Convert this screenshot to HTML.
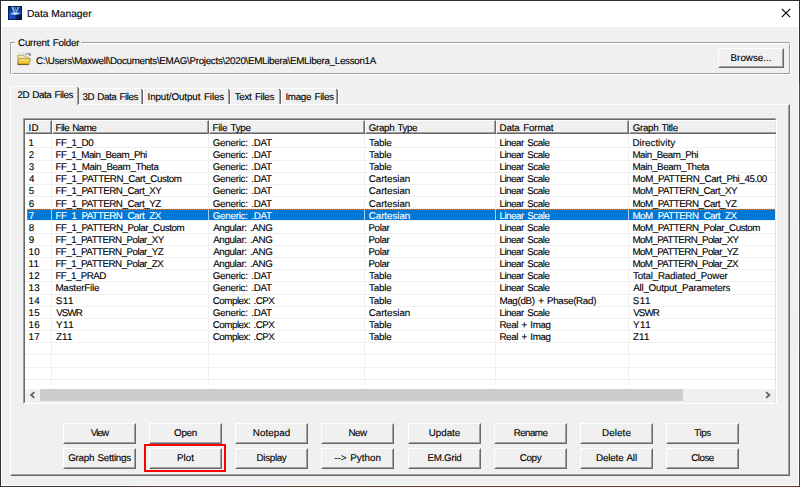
<!DOCTYPE html><html><head><meta charset="utf-8"><style>
*{margin:0;padding:0;box-sizing:border-box}
html,body{width:800px;height:487px;overflow:hidden;background:#f0f0f0}
body{position:relative;font-family:"Liberation Sans", sans-serif;font-size:9.8px;color:#000;text-rendering:geometricPrecision}
.a{position:absolute}
.t{position:absolute;white-space:pre;line-height:20px;height:20px;-webkit-text-stroke:0.12px currentColor}
</style></head><body>
<div class="a" style="left:0;top:0;width:800px;height:487px;border:1px solid #2e2e2e;border-right:0;border-bottom:0"></div>
<div class="a" style="left:799px;top:0;width:1px;height:487px;background:linear-gradient(#2e2e2e 0%,#2e2e2e 16%,#5a5030 18%,#6a5028 55%,#7a3424 75%,#7a2a22 100%)"></div>
<div class="a" style="left:0;top:486px;width:800px;height:1px;background:linear-gradient(90deg,#3a3a3a 0%,#5a3a34 30%,#7a2a22 70%,#7a2a22 100%)"></div>
<div class="a" style="left:1px;top:27px;width:1px;height:459px;background:#fff"></div>
<div class="a" style="left:798px;top:27px;width:1px;height:459px;background:#fff"></div>
<div class="a" style="left:1px;top:485px;width:798px;height:1px;background:#fff"></div>
<div class="a" style="left:1px;top:1px;width:798px;height:26px;background:#fff"></div>
<svg class="a" style="left:8px;top:6px" width="14" height="14" viewBox="0 0 14 14">
<defs>
<linearGradient id="ib" x1="0" y1="0" x2="1" y2="0"><stop offset="0" stop-color="#1a50d0"/><stop offset="0.5" stop-color="#1846b8"/><stop offset="0.58" stop-color="#0c2068"/><stop offset="1" stop-color="#081440"/></linearGradient>
<linearGradient id="it" x1="0" y1="0" x2="0" y2="1"><stop offset="0" stop-color="#0a1c60"/><stop offset="1" stop-color="#1e58c8"/></linearGradient>
<radialGradient id="ir" cx="0.5" cy="0.5" r="0.5"><stop offset="0" stop-color="#f4fcff"/><stop offset="0.4" stop-color="#b0e0ff" stop-opacity="0.95"/><stop offset="1" stop-color="#5aa0f0" stop-opacity="0"/></radialGradient>
<linearGradient id="ray" x1="0" y1="1" x2="0" y2="0"><stop offset="0" stop-color="#f0faff"/><stop offset="1" stop-color="#80c4ff" stop-opacity="0.75"/></linearGradient>
</defs>
<rect width="14" height="14" fill="#081848"/>
<rect x="0.5" y="0.5" width="13" height="7.5" fill="url(#it)"/>
<rect x="0.5" y="8" width="13" height="5.5" fill="url(#ib)"/>
<path d="M6.6 8 L2.8 0.6 L6 0.6 Z" fill="url(#ray)" opacity="1"/>
<path d="M7 8 L6.6 0.6 L8.4 0.6 Z" fill="url(#ray)" opacity="0.7"/>
<path d="M7.4 8 L9.4 0.6 L12 0.6 Z" fill="url(#ray)" opacity="0.95"/>
<ellipse cx="7.2" cy="7.6" rx="6.2" ry="1.9" fill="url(#ir)"/>
<rect x="0.25" y="0.25" width="13.5" height="13.5" fill="none" stroke="#061040" stroke-width="0.6"/>
</svg>
<div class="t" style="left:27px;top:4.85px;letter-spacing:0.000px;font-size:10.2px">Data Manager</div>
<svg class="a" style="left:781px;top:8px" width="11" height="11" viewBox="0 0 11 11"><path d="M0.8 0.8 L9.2 9.2 M9.2 0.8 L0.8 9.2" stroke="#000" stroke-width="1.15"/></svg>
<div class="a" style="left:10px;top:42px;width:780px;height:32px;border:1px solid #a0a0a0;border-right-color:#a0a0a0"></div>
<div class="a" style="left:11px;top:43px;width:779px;height:31px;border:1px solid #fff;border-right:0;border-bottom:0"></div>
<div class="a" style="left:790px;top:42px;width:1px;height:33px;background:#fff"></div>
<div class="a" style="left:10px;top:74px;width:781px;height:1px;background:#fff"></div>
<div class="a" style="left:15px;top:41px;width:66px;height:4px;background:#f0f0f0"></div>
<div class="t" style="left:18px;top:33.90px;letter-spacing:-0.200px;word-spacing:1.0px">Current Folder</div>
<svg class="a" style="left:17px;top:51px" width="16" height="16" viewBox="0 0 16 16">
<defs><linearGradient id="fg" x1="0" y1="0" x2="0" y2="1"><stop offset="0" stop-color="#fbe680"/><stop offset="1" stop-color="#e6b818"/></linearGradient>
<linearGradient id="fb" x1="0" y1="0" x2="0" y2="1"><stop offset="0" stop-color="#f6eaa8"/><stop offset="1" stop-color="#d8c060"/></linearGradient></defs>
<rect x="0" y="1" width="14.5" height="14.5" fill="#000" opacity="0.035"/>
<path d="M0.8 4.3 L6.8 4.3 L7.8 6.2 L11.3 6.2 L11.3 13.3 L0.8 13.3 Z" fill="url(#fb)" stroke="#9c8434" stroke-width="0.6"/>
<path d="M2.2 6.5 L10.5 6.5 M1.8 8 L2.4 12" stroke="#fffbe0" stroke-width="0.5" opacity="0.8"/>
<path d="M2.1 7.5 L13.6 7.8 L11.7 13.3 L0.8 13.3 Z" fill="url(#fg)" stroke="#8c7214" stroke-width="0.6"/>
<path d="M0.8 13.4 L11.7 13.4" stroke="#4a3c08" stroke-width="0.7"/>
<path d="M8.4 3.6 Q10.2 2.3 12.6 2.6" stroke="#6c6c6c" stroke-width="0.9" fill="none"/>
<path d="M12.1 3.0 L14.3 3.5 L12.7 5.0 Z" fill="#3c3c3c"/>
</svg>
<div class="t" style="left:36px;top:51.50px;letter-spacing:-0.292px">C:\Users\Maxwell\Documents\EMAG\Projects\2020\EMLibera\EMLibera_Lesson1A</div>
<div class="a" style="left:718px;top:48px;width:66px;height:20px;background:#f0f0f0;border:1px solid #fff;border-right-color:#696969;border-bottom-color:#696969"></div>
<div class="a" style="left:719px;top:49px;width:64px;height:18px;border:1px solid transparent;border-right-color:#a0a0a0;border-bottom-color:#a0a0a0"></div>
<div class="t" style="left:718px;top:49.30px;letter-spacing:0.000px;width:66px;text-align:center">Browse...</div>
<div class="a" style="left:10px;top:104px;width:780px;height:372px;border:1px solid #fff;border-right-color:#696969;border-bottom-color:#696969"></div>
<div class="a" style="left:11px;top:105px;width:778px;height:370px;border:1px solid transparent;border-right-color:#a0a0a0;border-bottom-color:#a0a0a0"></div>
<div class="a" style="left:79px;top:88px;width:62px;height:16px;border-top:1px solid #fff"></div>
<div class="a" style="left:142px;top:90px;width:1px;height:14px;background:#696969"></div>
<div class="a" style="left:141px;top:89px;width:1px;height:1px;background:#696969"></div>
<div class="a" style="left:141px;top:90px;width:1px;height:14px;background:#a0a0a0"></div>
<div class="a" style="left:143px;top:89px;width:1px;height:15px;background:#fff"></div>
<div class="t" style="left:82.5px;top:87.85px;letter-spacing:-0.458px;word-spacing:1.0px">3D Data Files</div>
<div class="a" style="left:142px;top:88px;width:86px;height:16px;border-top:1px solid #fff"></div>
<div class="a" style="left:229px;top:90px;width:1px;height:14px;background:#696969"></div>
<div class="a" style="left:228px;top:89px;width:1px;height:1px;background:#696969"></div>
<div class="a" style="left:228px;top:90px;width:1px;height:14px;background:#a0a0a0"></div>
<div class="a" style="left:230px;top:89px;width:1px;height:15px;background:#fff"></div>
<div class="t" style="left:147.5px;top:87.85px;letter-spacing:-0.094px;word-spacing:1.0px">Input/Output Files</div>
<div class="a" style="left:229px;top:88px;width:50px;height:16px;border-top:1px solid #fff"></div>
<div class="a" style="left:280px;top:90px;width:1px;height:14px;background:#696969"></div>
<div class="a" style="left:279px;top:89px;width:1px;height:1px;background:#696969"></div>
<div class="a" style="left:279px;top:90px;width:1px;height:14px;background:#a0a0a0"></div>
<div class="a" style="left:281px;top:89px;width:1px;height:15px;background:#fff"></div>
<div class="t" style="left:234.7px;top:87.85px;letter-spacing:-0.300px;word-spacing:1.0px">Text Files</div>
<div class="a" style="left:280px;top:88px;width:56px;height:16px;border-top:1px solid #fff"></div>
<div class="a" style="left:337px;top:90px;width:1px;height:14px;background:#696969"></div>
<div class="a" style="left:336px;top:89px;width:1px;height:1px;background:#696969"></div>
<div class="a" style="left:336px;top:90px;width:1px;height:14px;background:#a0a0a0"></div>
<div class="a" style="left:338px;top:89px;width:1px;height:15px;background:#fff"></div>
<div class="t" style="left:285.4px;top:87.85px;letter-spacing:-0.310px;word-spacing:1.0px">Image Files</div>
<div class="a" style="left:10px;top:86px;width:69px;height:19px;background:#f0f0f0;border-left:1px solid #fff;border-top:1px solid #fff"></div>
<div class="a" style="left:10px;top:86px;width:1px;height:1px;background:#f0f0f0"></div>
<div class="a" style="left:11px;top:87px;width:1px;height:1px;background:#fff"></div>
<div class="a" style="left:78px;top:88px;width:1px;height:16px;background:#696969"></div>
<div class="a" style="left:77px;top:87px;width:1px;height:1px;background:#696969"></div>
<div class="a" style="left:77px;top:88px;width:1px;height:17px;background:#a0a0a0"></div>
<div class="t" style="left:17.5px;top:86.00px;letter-spacing:-0.458px;word-spacing:1.0px">2D Data Files</div>
<div class="a" style="left:23px;top:118px;width:754px;height:286px;background:#fff;border:1px solid #a0a0a0;border-right-color:#fff;border-bottom-color:#fff"></div>
<div class="a" style="left:24px;top:119px;width:752px;height:284px;border:1px solid #696969;border-right-color:#e3e3e3;border-bottom-color:#e3e3e3"></div>
<div class="a" style="left:25px;top:120px;width:750px;height:14px;background:#f0f0f0"></div>
<div class="a" style="left:25px;top:120px;width:27px;height:14px;border:1px solid #fff;border-right-color:#696969;border-bottom-color:#696969"></div>
<div class="a" style="left:26px;top:121px;width:25px;height:12px;border-right:1px solid #a0a0a0;border-bottom:1px solid #a0a0a0"></div>
<div class="t" style="left:28.395605468750002px;top:118.50px;letter-spacing:0.500px">ID</div>
<div class="a" style="left:52px;top:120px;width:157px;height:14px;border:1px solid #fff;border-right-color:#696969;border-bottom-color:#696969"></div>
<div class="a" style="left:53px;top:121px;width:155px;height:12px;border-right:1px solid #a0a0a0;border-bottom:1px solid #a0a0a0"></div>
<div class="t" style="left:55.49609375px;top:118.50px;letter-spacing:-0.550px;word-spacing:1.0px">File Name</div>
<div class="a" style="left:209px;top:120px;width:156px;height:14px;border:1px solid #fff;border-right-color:#696969;border-bottom-color:#696969"></div>
<div class="a" style="left:210px;top:121px;width:154px;height:12px;border-right:1px solid #a0a0a0;border-bottom:1px solid #a0a0a0"></div>
<div class="t" style="left:212.49609375px;top:118.50px;letter-spacing:-0.263px;word-spacing:1.0px">File Type</div>
<div class="a" style="left:365px;top:120px;width:131px;height:14px;border:1px solid #fff;border-right-color:#696969;border-bottom-color:#696969"></div>
<div class="a" style="left:366px;top:121px;width:129px;height:12px;border-right:1px solid #a0a0a0;border-bottom:1px solid #a0a0a0"></div>
<div class="t" style="left:368.80712890625px;top:118.50px;letter-spacing:-0.361px;word-spacing:1.0px">Graph Type</div>
<div class="a" style="left:496px;top:120px;width:133px;height:14px;border:1px solid #fff;border-right-color:#696969;border-bottom-color:#696969"></div>
<div class="a" style="left:497px;top:121px;width:131px;height:12px;border-right:1px solid #a0a0a0;border-bottom:1px solid #a0a0a0"></div>
<div class="t" style="left:499.49609375px;top:118.50px;letter-spacing:-0.150px;word-spacing:1.0px">Data Format</div>
<div class="a" style="left:629px;top:120px;width:147px;height:14px;border:1px solid #fff;border-right:0;border-bottom-color:#696969"></div>
<div class="a" style="left:630px;top:121px;width:146px;height:12px;border-bottom:1px solid #a0a0a0"></div>
<div class="t" style="left:632.80712890625px;top:118.50px;letter-spacing:-0.360px;word-spacing:1.0px">Graph Title</div>
<div class="a" style="left:51px;top:134px;width:1px;height:252px;background:#f0f0f0"></div>
<div class="a" style="left:208px;top:134px;width:1px;height:252px;background:#f0f0f0"></div>
<div class="a" style="left:364px;top:134px;width:1px;height:252px;background:#f0f0f0"></div>
<div class="a" style="left:495px;top:134px;width:1px;height:252px;background:#f0f0f0"></div>
<div class="a" style="left:628px;top:134px;width:1px;height:252px;background:#f0f0f0"></div>
<div class="a" style="left:25px;top:147.40px;width:750px;height:1px;background:#f0f0f0"></div>
<div class="a" style="left:25px;top:159.58px;width:750px;height:1px;background:#f0f0f0"></div>
<div class="a" style="left:25px;top:171.76px;width:750px;height:1px;background:#f0f0f0"></div>
<div class="a" style="left:25px;top:183.94px;width:750px;height:1px;background:#f0f0f0"></div>
<div class="a" style="left:25px;top:196.12px;width:750px;height:1px;background:#f0f0f0"></div>
<div class="a" style="left:25px;top:208.30px;width:750px;height:1px;background:#f0f0f0"></div>
<div class="a" style="left:25px;top:220.48px;width:750px;height:1px;background:#f0f0f0"></div>
<div class="a" style="left:25px;top:232.66px;width:750px;height:1px;background:#f0f0f0"></div>
<div class="a" style="left:25px;top:244.84px;width:750px;height:1px;background:#f0f0f0"></div>
<div class="a" style="left:25px;top:257.02px;width:750px;height:1px;background:#f0f0f0"></div>
<div class="a" style="left:25px;top:269.20px;width:750px;height:1px;background:#f0f0f0"></div>
<div class="a" style="left:25px;top:281.38px;width:750px;height:1px;background:#f0f0f0"></div>
<div class="a" style="left:25px;top:293.56px;width:750px;height:1px;background:#f0f0f0"></div>
<div class="a" style="left:25px;top:305.74px;width:750px;height:1px;background:#f0f0f0"></div>
<div class="a" style="left:25px;top:317.92px;width:750px;height:1px;background:#f0f0f0"></div>
<div class="a" style="left:25px;top:330.10px;width:750px;height:1px;background:#f0f0f0"></div>
<div class="a" style="left:25px;top:342.28px;width:750px;height:1px;background:#f0f0f0"></div>
<div class="a" style="left:25px;top:354.46px;width:750px;height:1px;background:#f0f0f0"></div>
<div class="a" style="left:25px;top:366.64px;width:750px;height:1px;background:#f0f0f0"></div>
<div class="a" style="left:25px;top:378.82px;width:750px;height:1px;background:#f0f0f0"></div>
<div class="a" style="left:27px;top:209.30px;width:748px;height:11.18px;background:#0078d7"></div>
<div class="a" style="left:51px;top:209.30px;width:1px;height:11.18px;background:#a8d0f0"></div>
<div class="a" style="left:208px;top:209.30px;width:1px;height:11.18px;background:#a8d0f0"></div>
<div class="a" style="left:364px;top:209.30px;width:1px;height:11.18px;background:#a8d0f0"></div>
<div class="a" style="left:495px;top:209.30px;width:1px;height:11.18px;background:#a8d0f0"></div>
<div class="a" style="left:628px;top:209.30px;width:1px;height:11.18px;background:#a8d0f0"></div>
<div class="a" style="left:27px;top:209.30px;width:748px;height:11.18px;border-top:1px dotted #ff9a40;border-left:1px dotted #ff9a40;opacity:0.8"></div>
<div class="t" style="left:28.453515624999998px;top:133.80px;letter-spacing:0.134px">1</div>
<div class="t" style="left:55.396093750000006px;top:133.80px;letter-spacing:-0.417px">FF_1_D0</div>
<div class="t" style="left:212.70712890624998px;top:133.80px;letter-spacing:-0.250px;word-spacing:1.0px">Generic: .DAT</div>
<div class="t" style="left:368.97988281249997px;top:133.80px;letter-spacing:-0.175px">Table</div>
<div class="t" style="left:499.39609375px;top:133.80px;letter-spacing:-0.455px;word-spacing:1.0px">Linear Scale</div>
<div class="t" style="left:632.3960937500001px;top:133.80px;letter-spacing:0.025px">Directivity</div>
<div class="t" style="left:28.70712890625px;top:145.94px;letter-spacing:0.134px">2</div>
<div class="t" style="left:55.396093750000006px;top:145.94px;letter-spacing:-0.494px">FF_1_Main_Beam_Phi</div>
<div class="t" style="left:212.70712890624998px;top:145.94px;letter-spacing:-0.250px;word-spacing:1.0px">Generic: .DAT</div>
<div class="t" style="left:368.97988281249997px;top:145.94px;letter-spacing:-0.175px">Table</div>
<div class="t" style="left:499.39609375px;top:145.94px;letter-spacing:-0.455px;word-spacing:1.0px">Linear Scale</div>
<div class="t" style="left:632.3960937500001px;top:145.94px;letter-spacing:-0.483px">Main_Beam_Phi</div>
<div class="t" style="left:28.8267578125px;top:158.08px;letter-spacing:0.134px">3</div>
<div class="t" style="left:55.396093750000006px;top:158.08px;letter-spacing:-0.400px">FF_1_Main_Beam_Theta</div>
<div class="t" style="left:212.70712890624998px;top:158.08px;letter-spacing:-0.250px;word-spacing:1.0px">Generic: .DAT</div>
<div class="t" style="left:368.97988281249997px;top:158.08px;letter-spacing:-0.175px">Table</div>
<div class="t" style="left:499.39609375px;top:158.08px;letter-spacing:-0.455px;word-spacing:1.0px">Linear Scale</div>
<div class="t" style="left:632.3960937500001px;top:158.08px;letter-spacing:-0.407px">Main_Beam_Theta</div>
<div class="t" style="left:28.97509765625px;top:170.22px;letter-spacing:0.134px">4</div>
<div class="t" style="left:55.396093750000006px;top:170.22px;letter-spacing:-0.396px">FF_1_PATTERN_Cart_Custom</div>
<div class="t" style="left:212.70712890624998px;top:170.22px;letter-spacing:-0.250px;word-spacing:1.0px">Generic: .DAT</div>
<div class="t" style="left:368.70234375px;top:170.22px;letter-spacing:-0.037px">Cartesian</div>
<div class="t" style="left:499.39609375px;top:170.22px;letter-spacing:-0.455px;word-spacing:1.0px">Linear Scale</div>
<div class="t" style="left:632.3960937500001px;top:170.22px;letter-spacing:-0.404px">MoM_PATTERN_Cart_Phi_45.00</div>
<div class="t" style="left:28.8076171875px;top:182.36px;letter-spacing:0.134px">5</div>
<div class="t" style="left:55.396093750000006px;top:182.36px;letter-spacing:-0.458px">FF_1_PATTERN_Cart_XY</div>
<div class="t" style="left:212.70712890624998px;top:182.36px;letter-spacing:-0.250px;word-spacing:1.0px">Generic: .DAT</div>
<div class="t" style="left:368.70234375px;top:182.36px;letter-spacing:-0.037px">Cartesian</div>
<div class="t" style="left:499.39609375px;top:182.36px;letter-spacing:-0.455px;word-spacing:1.0px">Linear Scale</div>
<div class="t" style="left:632.3960937500001px;top:182.36px;letter-spacing:-0.489px">MoM_PATTERN_Cart_XY</div>
<div class="t" style="left:28.70234375px;top:194.50px;letter-spacing:0.134px">6</div>
<div class="t" style="left:55.396093750000006px;top:194.50px;letter-spacing:-0.458px">FF_1_PATTERN_Cart_YZ</div>
<div class="t" style="left:212.70712890624998px;top:194.50px;letter-spacing:-0.250px;word-spacing:1.0px">Generic: .DAT</div>
<div class="t" style="left:368.70234375px;top:194.50px;letter-spacing:-0.037px">Cartesian</div>
<div class="t" style="left:499.39609375px;top:194.50px;letter-spacing:-0.455px;word-spacing:1.0px">Linear Scale</div>
<div class="t" style="left:632.3960937500001px;top:194.50px;letter-spacing:-0.489px">MoM_PATTERN_Cart_YZ</div>
<div class="t" style="left:28.69755859375px;top:206.64px;letter-spacing:0.134px;color:#fff">7</div>
<div class="t" style="left:55.396093750000006px;top:206.64px;letter-spacing:-0.458px;color:#fff">FF_1_PATTERN_Cart_ZX</div>
<div class="t" style="left:212.70712890624998px;top:206.64px;letter-spacing:-0.250px;word-spacing:1.0px;color:#fff">Generic: .DAT</div>
<div class="t" style="left:368.70234375px;top:206.64px;letter-spacing:-0.037px;color:#fff">Cartesian</div>
<div class="t" style="left:499.39609375px;top:206.64px;letter-spacing:-0.455px;word-spacing:1.0px;color:#fff">Linear Scale</div>
<div class="t" style="left:632.3960937500001px;top:206.64px;letter-spacing:-0.489px;color:#fff">MoM_PATTERN_Cart_ZX</div>
<div class="t" style="left:28.77412109375px;top:218.78px;letter-spacing:0.134px">8</div>
<div class="t" style="left:55.396093750000006px;top:218.78px;letter-spacing:-0.454px">FF_1_PATTERN_Polar_Custom</div>
<div class="t" style="left:213.18085937499998px;top:218.78px;letter-spacing:-0.375px;word-spacing:1.0px">Angular: .ANG</div>
<div class="t" style="left:368.39609375px;top:218.78px;letter-spacing:-0.355px">Polar</div>
<div class="t" style="left:499.39609375px;top:218.78px;letter-spacing:-0.455px;word-spacing:1.0px">Linear Scale</div>
<div class="t" style="left:632.3960937500001px;top:218.78px;letter-spacing:-0.478px">MoM_PATTERN_Polar_Custom</div>
<div class="t" style="left:28.740624999999998px;top:230.92px;letter-spacing:0.134px">9</div>
<div class="t" style="left:55.396093750000006px;top:230.92px;letter-spacing:-0.525px">FF_1_PATTERN_Polar_XY</div>
<div class="t" style="left:213.18085937499998px;top:230.92px;letter-spacing:-0.375px;word-spacing:1.0px">Angular: .ANG</div>
<div class="t" style="left:368.39609375px;top:230.92px;letter-spacing:-0.355px">Polar</div>
<div class="t" style="left:499.39609375px;top:230.92px;letter-spacing:-0.455px;word-spacing:1.0px">Linear Scale</div>
<div class="t" style="left:632.3960937500001px;top:230.92px;letter-spacing:-0.611px">MoM_PATTERN_Polar_XY</div>
<div class="t" style="left:28.453515624999998px;top:243.06px;letter-spacing:0.268px">10</div>
<div class="t" style="left:55.396093750000006px;top:243.06px;letter-spacing:-0.525px">FF_1_PATTERN_Polar_YZ</div>
<div class="t" style="left:213.18085937499998px;top:243.06px;letter-spacing:-0.375px;word-spacing:1.0px">Angular: .ANG</div>
<div class="t" style="left:368.39609375px;top:243.06px;letter-spacing:-0.355px">Polar</div>
<div class="t" style="left:499.39609375px;top:243.06px;letter-spacing:-0.455px;word-spacing:1.0px">Linear Scale</div>
<div class="t" style="left:632.3960937500001px;top:243.06px;letter-spacing:-0.611px">MoM_PATTERN_Polar_YZ</div>
<div class="t" style="left:28.453515624999998px;top:255.20px;letter-spacing:0.268px">11</div>
<div class="t" style="left:55.396093750000006px;top:255.20px;letter-spacing:-0.525px">FF_1_PATTERN_Polar_ZX</div>
<div class="t" style="left:213.18085937499998px;top:255.20px;letter-spacing:-0.375px;word-spacing:1.0px">Angular: .ANG</div>
<div class="t" style="left:368.39609375px;top:255.20px;letter-spacing:-0.355px">Polar</div>
<div class="t" style="left:499.39609375px;top:255.20px;letter-spacing:-0.455px;word-spacing:1.0px">Linear Scale</div>
<div class="t" style="left:632.3960937500001px;top:255.20px;letter-spacing:-0.611px">MoM_PATTERN_Polar_ZX</div>
<div class="t" style="left:28.453515624999998px;top:267.34px;letter-spacing:0.268px">12</div>
<div class="t" style="left:55.396093750000006px;top:267.34px;letter-spacing:-0.588px">FF_1_PRAD</div>
<div class="t" style="left:212.70712890624998px;top:267.34px;letter-spacing:-0.250px;word-spacing:1.0px">Generic: .DAT</div>
<div class="t" style="left:368.97988281249997px;top:267.34px;letter-spacing:-0.175px">Table</div>
<div class="t" style="left:499.39609375px;top:267.34px;letter-spacing:-0.455px;word-spacing:1.0px">Linear Scale</div>
<div class="t" style="left:632.9798828125px;top:267.34px;letter-spacing:-0.200px">Total_Radiated_Power</div>
<div class="t" style="left:28.453515624999998px;top:279.48px;letter-spacing:0.268px">13</div>
<div class="t" style="left:55.396093750000006px;top:279.48px;letter-spacing:-0.178px">MasterFile</div>
<div class="t" style="left:212.70712890624998px;top:279.48px;letter-spacing:-0.250px;word-spacing:1.0px">Generic: .DAT</div>
<div class="t" style="left:368.97988281249997px;top:279.48px;letter-spacing:-0.175px">Table</div>
<div class="t" style="left:499.39609375px;top:279.48px;letter-spacing:-0.455px;word-spacing:1.0px">Linear Scale</div>
<div class="t" style="left:633.1808593750001px;top:279.48px;letter-spacing:-0.225px">All_Output_Parameters</div>
<div class="t" style="left:28.453515624999998px;top:291.62px;letter-spacing:0.268px">14</div>
<div class="t" style="left:55.754980468750006px;top:291.62px;letter-spacing:0.500px">S11</div>
<div class="t" style="left:212.70234374999998px;top:291.62px;letter-spacing:-0.483px;word-spacing:1.0px">Complex: .CPX</div>
<div class="t" style="left:368.97988281249997px;top:291.62px;letter-spacing:-0.175px">Table</div>
<div class="t" style="left:499.39609375px;top:291.62px;letter-spacing:-0.316px;word-spacing:1.0px">Mag(dB) + Phase(Rad)</div>
<div class="t" style="left:632.7549804687501px;top:291.62px;letter-spacing:0.500px">S11</div>
<div class="t" style="left:28.453515624999998px;top:303.76px;letter-spacing:0.268px">15</div>
<div class="t" style="left:56.156933593750004px;top:303.76px;letter-spacing:-0.900px">VSWR</div>
<div class="t" style="left:212.70712890624998px;top:303.76px;letter-spacing:-0.250px;word-spacing:1.0px">Generic: .DAT</div>
<div class="t" style="left:368.70234375px;top:303.76px;letter-spacing:-0.037px">Cartesian</div>
<div class="t" style="left:499.39609375px;top:303.76px;letter-spacing:-0.455px;word-spacing:1.0px">Linear Scale</div>
<div class="t" style="left:633.1569335937501px;top:303.76px;letter-spacing:-0.900px">VSWR</div>
<div class="t" style="left:28.453515624999998px;top:315.90px;letter-spacing:0.268px">16</div>
<div class="t" style="left:55.98466796875px;top:315.90px;letter-spacing:0.500px">Y11</div>
<div class="t" style="left:212.70234374999998px;top:315.90px;letter-spacing:-0.483px;word-spacing:1.0px">Complex: .CPX</div>
<div class="t" style="left:368.97988281249997px;top:315.90px;letter-spacing:-0.175px">Table</div>
<div class="t" style="left:499.39609375px;top:315.90px;letter-spacing:-0.350px;word-spacing:1.0px">Real + Imag</div>
<div class="t" style="left:632.98466796875px;top:315.90px;letter-spacing:0.500px">Y11</div>
<div class="t" style="left:28.453515624999998px;top:328.04px;letter-spacing:0.268px">17</div>
<div class="t" style="left:55.88896484375px;top:328.04px;letter-spacing:0.150px">Z11</div>
<div class="t" style="left:212.70234374999998px;top:328.04px;letter-spacing:-0.483px;word-spacing:1.0px">Complex: .CPX</div>
<div class="t" style="left:368.97988281249997px;top:328.04px;letter-spacing:-0.175px">Table</div>
<div class="t" style="left:499.39609375px;top:328.04px;letter-spacing:-0.350px;word-spacing:1.0px">Real + Imag</div>
<div class="t" style="left:632.88896484375px;top:328.04px;letter-spacing:0.150px">Z11</div>
<div class="a" style="left:25px;top:388.5px;width:750px;height:14px;background:#f0f0f0"></div>
<div class="a" style="left:40px;top:389px;width:643px;height:12px;background:#cdcdcd"></div>
<svg class="a" style="left:28px;top:390px" width="10" height="10" viewBox="0 0 10 10"><path d="M6.4 2.2 L3.1 5 L6.4 7.8" stroke="#606060" stroke-width="1.75" fill="none"/></svg>
<svg class="a" style="left:763px;top:390px" width="10" height="10" viewBox="0 0 10 10"><path d="M3.1 2.2 L6.4 5 L3.1 7.8" stroke="#606060" stroke-width="1.75" fill="none"/></svg>
<div class="a" style="left:63px;top:423px;width:73px;height:21px;background:#f0f0f0;border:1px solid #fff;border-right-color:#696969;border-bottom-color:#696969"></div>
<div class="a" style="left:64px;top:424px;width:71px;height:19px;border:1px solid transparent;border-right-color:#a0a0a0;border-bottom-color:#a0a0a0"></div>
<div class="t" style="left:63px;top:424.30px;letter-spacing:-0.833px;width:73px;text-align:center">View</div>
<div class="a" style="left:63px;top:448px;width:73px;height:21px;background:#f0f0f0;border:1px solid #fff;border-right-color:#696969;border-bottom-color:#696969"></div>
<div class="a" style="left:64px;top:449px;width:71px;height:19px;border:1px solid transparent;border-right-color:#a0a0a0;border-bottom-color:#a0a0a0"></div>
<div class="t" style="left:63px;top:449.30px;letter-spacing:-0.269px;word-spacing:1.0px;width:73px;text-align:center">Graph Settings</div>
<div class="a" style="left:149px;top:423px;width:73px;height:21px;background:#f0f0f0;border:1px solid #fff;border-right-color:#696969;border-bottom-color:#696969"></div>
<div class="a" style="left:150px;top:424px;width:71px;height:19px;border:1px solid transparent;border-right-color:#a0a0a0;border-bottom-color:#a0a0a0"></div>
<div class="t" style="left:149px;top:424.30px;letter-spacing:-0.300px;width:73px;text-align:center">Open</div>
<div class="a" style="left:149px;top:448px;width:73px;height:21px;background:#f0f0f0;border:1px solid #fff;border-right-color:#696969;border-bottom-color:#696969"></div>
<div class="a" style="left:150px;top:449px;width:71px;height:19px;border:1px solid transparent;border-right-color:#a0a0a0;border-bottom-color:#a0a0a0"></div>
<div class="t" style="left:149px;top:449.30px;letter-spacing:0.083px;width:73px;text-align:center">Plot</div>
<div class="a" style="left:235px;top:423px;width:73px;height:21px;background:#f0f0f0;border:1px solid #fff;border-right-color:#696969;border-bottom-color:#696969"></div>
<div class="a" style="left:236px;top:424px;width:71px;height:19px;border:1px solid transparent;border-right-color:#a0a0a0;border-bottom-color:#a0a0a0"></div>
<div class="t" style="left:235px;top:424.30px;letter-spacing:0.067px;width:73px;text-align:center">Notepad</div>
<div class="a" style="left:235px;top:448px;width:73px;height:21px;background:#f0f0f0;border:1px solid #fff;border-right-color:#696969;border-bottom-color:#696969"></div>
<div class="a" style="left:236px;top:449px;width:71px;height:19px;border:1px solid transparent;border-right-color:#a0a0a0;border-bottom-color:#a0a0a0"></div>
<div class="t" style="left:235px;top:449.30px;letter-spacing:-0.317px;width:73px;text-align:center">Display</div>
<div class="a" style="left:321px;top:423px;width:73px;height:21px;background:#f0f0f0;border:1px solid #fff;border-right-color:#696969;border-bottom-color:#696969"></div>
<div class="a" style="left:322px;top:424px;width:71px;height:19px;border:1px solid transparent;border-right-color:#a0a0a0;border-bottom-color:#a0a0a0"></div>
<div class="t" style="left:321px;top:424.30px;letter-spacing:-0.450px;width:73px;text-align:center">New</div>
<div class="a" style="left:321px;top:448px;width:73px;height:21px;background:#f0f0f0;border:1px solid #fff;border-right-color:#696969;border-bottom-color:#696969"></div>
<div class="a" style="left:322px;top:449px;width:71px;height:19px;border:1px solid transparent;border-right-color:#a0a0a0;border-bottom-color:#a0a0a0"></div>
<div class="t" style="left:321px;top:449.30px;letter-spacing:0.028px;word-spacing:1.0px;width:73px;text-align:center">--&gt; Python</div>
<div class="a" style="left:408px;top:423px;width:73px;height:21px;background:#f0f0f0;border:1px solid #fff;border-right-color:#696969;border-bottom-color:#696969"></div>
<div class="a" style="left:409px;top:424px;width:71px;height:19px;border:1px solid transparent;border-right-color:#a0a0a0;border-bottom-color:#a0a0a0"></div>
<div class="t" style="left:408px;top:424.30px;letter-spacing:0.000px;width:73px;text-align:center">Update</div>
<div class="a" style="left:408px;top:448px;width:73px;height:21px;background:#f0f0f0;border:1px solid #fff;border-right-color:#696969;border-bottom-color:#696969"></div>
<div class="a" style="left:409px;top:449px;width:71px;height:19px;border:1px solid transparent;border-right-color:#a0a0a0;border-bottom-color:#a0a0a0"></div>
<div class="t" style="left:408px;top:449.30px;letter-spacing:-0.292px;width:73px;text-align:center">EM.Grid</div>
<div class="a" style="left:494px;top:423px;width:73px;height:21px;background:#f0f0f0;border:1px solid #fff;border-right-color:#696969;border-bottom-color:#696969"></div>
<div class="a" style="left:495px;top:424px;width:71px;height:19px;border:1px solid transparent;border-right-color:#a0a0a0;border-bottom-color:#a0a0a0"></div>
<div class="t" style="left:494px;top:424.30px;letter-spacing:-0.580px;width:73px;text-align:center">Rename</div>
<div class="a" style="left:494px;top:448px;width:73px;height:21px;background:#f0f0f0;border:1px solid #fff;border-right-color:#696969;border-bottom-color:#696969"></div>
<div class="a" style="left:495px;top:449px;width:71px;height:19px;border:1px solid transparent;border-right-color:#a0a0a0;border-bottom-color:#a0a0a0"></div>
<div class="t" style="left:494px;top:449.30px;letter-spacing:-0.367px;width:73px;text-align:center">Copy</div>
<div class="a" style="left:580px;top:423px;width:73px;height:21px;background:#f0f0f0;border:1px solid #fff;border-right-color:#696969;border-bottom-color:#696969"></div>
<div class="a" style="left:581px;top:424px;width:71px;height:19px;border:1px solid transparent;border-right-color:#a0a0a0;border-bottom-color:#a0a0a0"></div>
<div class="t" style="left:580px;top:424.30px;letter-spacing:0.120px;width:73px;text-align:center">Delete</div>
<div class="a" style="left:580px;top:448px;width:73px;height:21px;background:#f0f0f0;border:1px solid #fff;border-right-color:#696969;border-bottom-color:#696969"></div>
<div class="a" style="left:581px;top:449px;width:71px;height:19px;border:1px solid transparent;border-right-color:#a0a0a0;border-bottom-color:#a0a0a0"></div>
<div class="t" style="left:580px;top:449.30px;letter-spacing:-0.156px;word-spacing:1.0px;width:73px;text-align:center">Delete All</div>
<div class="a" style="left:666px;top:423px;width:73px;height:21px;background:#f0f0f0;border:1px solid #fff;border-right-color:#696969;border-bottom-color:#696969"></div>
<div class="a" style="left:667px;top:424px;width:71px;height:19px;border:1px solid transparent;border-right-color:#a0a0a0;border-bottom-color:#a0a0a0"></div>
<div class="t" style="left:666px;top:424.30px;letter-spacing:-0.417px;width:73px;text-align:center">Tips</div>
<div class="a" style="left:666px;top:448px;width:73px;height:21px;background:#f0f0f0;border:1px solid #fff;border-right-color:#696969;border-bottom-color:#696969"></div>
<div class="a" style="left:667px;top:449px;width:71px;height:19px;border:1px solid transparent;border-right-color:#a0a0a0;border-bottom-color:#a0a0a0"></div>
<div class="t" style="left:666px;top:449.30px;letter-spacing:-0.475px;width:73px;text-align:center">Close</div>
<div class="a" style="left:143.5px;top:444px;width:82.5px;height:28px;border:2.5px solid #ff0000"></div>
</body></html>
